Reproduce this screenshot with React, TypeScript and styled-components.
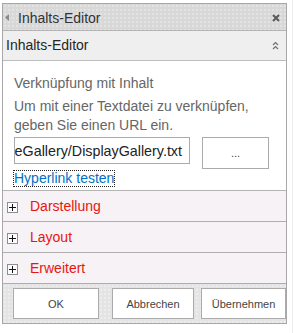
import React from 'react'
import styled, {createGlobalStyle} from 'styled-components'

const GlobalStyle = createGlobalStyle`
  html, body {
    margin: 0;
    padding: 0;
    background: #fff;
  }
  body {
    font-family: "Liberation Sans", Arial, sans-serif;
  }
`

const Page = styled.div`
  display: flex;
  align-items: flex-start;
  min-height: 100vh;
  padding-left: 2px;
`

const Panel = styled.div`
  width: 285px;
  margin-top: 3px;
  box-sizing: border-box;
  border: 1px solid #a7a7a7;
  display: flex;
  flex-direction: column;
`

const Gutter = styled.div`
  align-self: stretch;
  width: 1px;
  margin-left: 5px;
  background: #ececec;
`

const TitleBar = styled.div`
  display: flex;
  align-items: center;
  height: 27px;
  padding: 1px 6px 0 2px;
  box-sizing: border-box;
  border-bottom: 1px solid #b4b4b4;
  background-color: #d8d8d8;
  background-image: radial-gradient(circle, #e3e3e3 0.7px, transparent 0.9px);
  background-size: 4px 4px;
  color: #333;
  font-size: 14px;
`

const TitleText = styled.span`
  flex: 1;
  margin-left: 8px;
  line-height: 26px;
`

const SubHeader = styled.div`
  display: flex;
  align-items: center;
  height: 29px;
  padding: 0 7px 0 3px;
  border-bottom: 1px solid #bdbdbd;
  background: #efefef;
  color: #262626;
  font-size: 14px;
`

const SubHeaderText = styled.span`
  flex: 1;
  line-height: 29px;
`

const Content = styled.div`
  height: 130px;
  box-sizing: border-box;
  padding: 13px 11px 4px;
  border-bottom: 1px solid #b4b4b4;
  background: #fff;
  display: flex;
  flex-direction: column;
  align-items: flex-start;
`

const Label = styled.div<{$gap?: number}>`
  color: #666;
  font-size: 14px;
  line-height: 19px;
  margin-bottom: ${(p) => p.$gap ?? 0}px;
`

const InputRow = styled.div`
  display: flex;
  align-items: flex-start;
  gap: 12px;
  margin-top: 2px;
`

const UrlBox = styled.div`
  width: 176px;
  height: 27px;
  box-sizing: border-box;
  border: 1px solid #ababab;
  padding-right: 7px;
  display: flex;
  align-items: center;
  justify-content: flex-end;
  overflow: hidden;
  white-space: nowrap;
  color: #222;
  font-size: 14.3px;
`

const Button = styled.button<{$width: number; $height: number; $offset?: number}>`
  width: ${(p) => p.$width}px;
  height: ${(p) => p.$height}px;
  margin: 0 0 0 ${(p) => p.$offset ?? 0}px;
  padding: 0;
  box-sizing: border-box;
  border: 1px solid #ababab;
  border-radius: 0;
  background: #fff;
  color: #444;
  font-family: "Liberation Sans", Arial, sans-serif;
  font-size: 11px;
  flex-shrink: 0;
`

const TestLink = styled.a`
  margin: 1px 0 0 -1px;
  border: 1px dotted #222;
  line-height: 15px;
  color: #0072c6;
  font-size: 14px;
  text-decoration: none;
`

const Section = styled.div`
  display: flex;
  align-items: center;
  height: 31px;
  box-sizing: border-box;
  padding-left: 4px;
  border-bottom: 1px solid #aeaeae;
  background: #f6f2f5;
`

const Expander = styled.span`
  width: 11px;
  height: 11px;
  box-sizing: border-box;
  margin-top: 2px;
  border: 1px solid #8e8e8e;
  background: #fdfdfd;
  display: flex;
  align-items: center;
  justify-content: center;
`

const SectionTitle = styled.span`
  margin-left: 12px;
  color: #e8160f;
  font-size: 14px;
  line-height: 30px;
`

const Footer = styled.div`
  display: flex;
  align-items: flex-start;
  height: 39px;
  box-sizing: border-box;
  padding: 4px 0 0 10px;
  background-color: #e4e4e4;
  background-image: radial-gradient(circle, #ededed 0.7px, transparent 0.9px);
  background-size: 4px 4px;
`

const PlusIcon = () => (
  <svg width="7" height="7" viewBox="0 0 7 7">
    <path d="M0 3.5h7M3.5 0v7" stroke="#111" strokeWidth="1" />
  </svg>
)

const sections = ['Darstellung', 'Layout', 'Erweitert']

export default function App() {
  return (
    <>
      <GlobalStyle />
      <Page>
        <Panel>
          <TitleBar>
            <svg width="5" height="7" viewBox="0 0 5 7">
              <path d="M4 0v7L0 3.5z" fill="#8a8a8a" />
            </svg>
            <TitleText>Inhalts-Editor</TitleText>
            <svg width="8" height="8" viewBox="0 0 8 8">
              <path d="M1 1l6 6M7 1L1 7" stroke="#595959" strokeWidth="2" />
            </svg>
          </TitleBar>
          <SubHeader>
            <SubHeaderText>Inhalts-Editor</SubHeaderText>
            <svg width="7" height="9" viewBox="0 0 7 9">
              <path d="M1 4L3.5 1.5 6 4M1 8L3.5 5.5 6 8" stroke="#707070" strokeWidth="1.2" fill="none" />
            </svg>
          </SubHeader>
          <Content>
            <Label $gap={4}>Verknüpfung mit Inhalt</Label>
            <Label>Um mit einer Textdatei zu verknüpfen,</Label>
            <Label>geben Sie einen URL ein.</Label>
            <InputRow>
              <UrlBox>/SiteAssets/ImageGallery/DisplayGallery.txt</UrlBox>
              <Button $width={67} $height={32}>...</Button>
            </InputRow>
            <TestLink href="#">Hyperlink testen</TestLink>
          </Content>
          {sections.map((name) => (
            <Section key={name}>
              <Expander>
                <PlusIcon />
              </Expander>
              <SectionTitle>{name}</SectionTitle>
            </Section>
          ))}
          <Footer>
            <Button $width={86} $height={31}>OK</Button>
            <Button $width={82} $height={31} $offset={13}>Abbrechen</Button>
            <Button $width={85} $height={31} $offset={7}>Übernehmen</Button>
          </Footer>
        </Panel>
        <Gutter />
      </Page>
    </>
  )
}
